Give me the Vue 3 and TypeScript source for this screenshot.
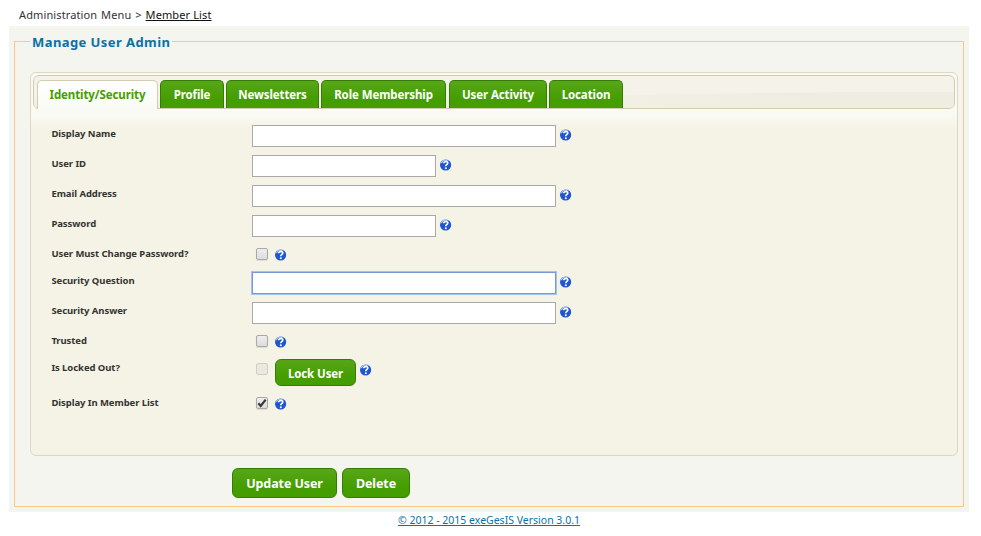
<script setup lang="ts">
import { ref } from 'vue'

interface Tab {
  label: string
  width: number
  gap: number
}

interface Field {
  label: string
  kind: 'wide' | 'short' | 'toggle' | 'lock'
  height: number
  checked?: boolean
  focused?: boolean
}

const tabs: Tab[] = [
  { label: 'Identity/Security', width: 121, gap: 0 },
  { label: 'Profile', width: 64, gap: 2 },
  { label: 'Newsletters', width: 93, gap: 2 },
  { label: 'Role Membership', width: 125, gap: 2 },
  { label: 'User Activity', width: 98, gap: 3 },
  { label: 'Location', width: 74, gap: 2 },
]

const fields: Field[] = [
  { label: 'Display Name', kind: 'wide', height: 30 },
  { label: 'User ID', kind: 'short', height: 30 },
  { label: 'Email Address', kind: 'wide', height: 30 },
  { label: 'Password', kind: 'short', height: 30 },
  { label: 'User Must Change Password?', kind: 'toggle', height: 27 },
  { label: 'Security Question', kind: 'wide', height: 30, focused: true },
  { label: 'Security Answer', kind: 'wide', height: 30 },
  { label: 'Trusted', kind: 'toggle', height: 27 },
  { label: 'Is Locked Out?', kind: 'lock', height: 35 },
  { label: 'Display In Member List', kind: 'toggle', height: 30, checked: true },
]

const active = ref(0)
</script>

<template>
  <div class="page">
    <nav class="crumbs">Administration Menu &gt; <a class="crumb-link">Member List</a></nav>
    <main class="main">
      <section class="frame">
        <h1 class="legend">Manage User Admin</h1>
        <div class="tabs">
          <div class="tabbar">
            <svg class="wave" viewBox="0 0 920 32" preserveAspectRatio="none">
              <defs>
                <linearGradient id="wave-fade" x1="0" x2="1" y1="0" y2="0">
                  <stop offset="0.6" stop-color="#f2efe5" />
                  <stop offset="0.85" stop-color="#efede1" />
                </linearGradient>
              </defs>
              <path d="M0 24 Q350 23 600 19 T920 16 V32 H0Z" fill="url(#wave-fade)" />
            </svg>
            <div class="tablist">
              <button
                v-for="(t, i) in tabs"
                :key="t.label"
                class="tab"
                :class="{ active: active === i }"
                :style="{ width: t.width + 'px', marginLeft: t.gap + 'px' }"
                @click="active = i"
              >{{ t.label }}</button>
            </div>
          </div>
          <div class="fields">
            <div
              v-for="f in fields"
              :key="f.label"
              class="row"
              :class="'row-' + f.kind"
              :style="{ height: f.height + 'px' }"
            >
              <div class="label">{{ f.label }}</div>
              <div
                v-if="f.kind === 'wide' || f.kind === 'short'"
                class="input"
                :class="[f.kind, { focused: f.focused }]"
              ></div>
              <div v-else class="check" :class="{ disabled: f.kind === 'lock' }">
                <svg v-if="f.checked" class="mark" viewBox="0 0 10 10">
                  <path d="M1.4 5.2L3.7 7.9L8.7 1.6" fill="none" stroke="#3b3b3b" stroke-width="2.3" />
                </svg>
              </div>
              <button v-if="f.kind === 'lock'" class="btn lock-btn">Lock User</button>
              <svg class="help" viewBox="0 0 12 12">
                <circle cx="5.6" cy="6" r="5.6" fill="#1f56cf" />
                <path d="M.4 4.8A5.6 5.6 0 0 1 8.2 .9L6.6 2.2Q3.5 1 2.3 3.8Z" fill="#a9c5f4" />
                <path d="M3.7 4.3Q3.8 2.5 5.8 2.5Q7.9 2.6 7.8 4.1Q7.7 5.2 6.4 5.8Q5.8 6.2 5.8 7.2" fill="none" stroke="#fff" stroke-width="1.6" />
                <rect x="4.9" y="8.4" width="1.8" height="1.7" fill="#fff" />
              </svg>
            </div>
          </div>
        </div>
        <div class="actions">
          <button class="btn update-btn">Update User</button>
          <button class="btn delete-btn">Delete</button>
        </div>
      </section>
    </main>
    <footer class="footer"><a>© 2012 - 2015 exeGesIS Version 3.0.1</a></footer>
  </div>
</template>

<style>
body {
  background: #fff;
  overflow: hidden;
}
</style>

<style scoped>
* {
  box-sizing: border-box;
}
.page {
  width: 981px;
  height: 536px;
  font-family: "Noto Sans", "Open Sans", sans-serif;
  color: #333;
}
.crumbs {
  height: 26px;
  padding: 5px 0 0 19px;
  font-size: 11px;
  line-height: 20px;
  letter-spacing: 0.12px;
  word-spacing: 0.9px;
  white-space: nowrap;
}
.crumb-link {
  color: #111;
  text-decoration: underline;
  word-spacing: 0;
  letter-spacing: 0.12px;
}
.main {
  width: 960px;
  height: 486px;
  margin-left: 9px;
  padding: 15px 5px 5px;
  background: #f4f5ef;
}
.frame {
  width: 950px;
  height: 466px;
  border: 1px solid #ffc68c;
  padding-left: 15px;
}
.legend {
  width: 142px;
  height: 20px;
  margin: -10px 0 0;
  padding-left: 2px;
  background: #f4f5ef;
  color: #0972a5;
  font-size: 13px;
  line-height: 20px;
  font-weight: 700;
  letter-spacing: 0.42px;
  white-space: nowrap;
}
.tabs {
  width: 928px;
  height: 384px;
  margin-top: 20px;
  padding: 2px;
  border: 1px solid #ddd8c2;
  border-radius: 6px;
  background: linear-gradient(#fafaf5 0, #fafaf5 42px, #f5f3e5 55px);
}
.tabbar {
  display: grid;
  width: 922px;
  height: 34px;
  border: 1px solid #d4ccb0;
  border-radius: 6px;
  background: #f5f2ea;
}
.wave,
.tablist {
  grid-area: 1 / 1;
}
.wave {
  width: 920px;
  height: 32px;
  border-radius: 5px;
}
.tablist {
  display: flex;
  align-items: flex-start;
  padding: 4px 0 0 3px;
  z-index: 1;
}
.tab {
  display: flex;
  flex: none;
  justify-content: center;
  height: 28px;
  padding: 0;
  border: 1px solid #327e04;
  border-bottom: 0;
  border-radius: 5px 5px 0 0;
  background: linear-gradient(#58a618, #459e00 65%);
  color: #fff;
  font: 700 11.5px/28px "Noto Sans", "Open Sans", sans-serif;
  letter-spacing: -0.1px;
  white-space: nowrap;
}
.tab.active {
  height: 29px;
  border-color: #d4ccb0;
  background: linear-gradient(#fff, #fafaf5);
  color: #459e00;
}
.fields {
  padding: 12px 0 0 18px;
}
.row {
  display: flex;
  align-items: flex-start;
}
.label {
  width: 201px;
  flex: none;
  padding: 3px 0 0 0.4px;
  font-size: 9.5px;
  line-height: 20px;
  font-weight: 700;
  letter-spacing: -0.07px;
  white-space: nowrap;
}
.input {
  height: 22px;
  margin-top: 4px;
  border: 1px solid #a9a9a9;
  background: #fff;
}
.input.wide {
  width: 304px;
}
.input.short {
  width: 184px;
}
.input.focused {
  border-color: #7898d8;
  box-shadow: 0 0 0 1px #a4c4f0;
}
.check {
  width: 12px;
  height: 12px;
  margin: 7px 3px 0 4px;
  border: 1px solid #a8a8a8;
  border-radius: 2px;
  background: linear-gradient(#eee, #dcdcdc);
  box-shadow: 0 1px 1px #dedbd0;
}
.check.disabled {
  margin-top: 8px;
  border-color: #d0cfc5;
  background: #eae9df;
  box-shadow: none;
}
.mark {
  display: block;
  width: 10px;
  height: 10px;
}
.help {
  width: 12px;
  height: 12px;
  margin: 8px 0 0 4px;
}
.row-lock .help {
  margin-top: 9px;
}
.btn {
  flex: none;
  padding: 0;
  border: 1px solid #327e04;
  border-radius: 6px;
  background: linear-gradient(#58a618, #459e00 65%);
  color: #fff;
  font-family: "Noto Sans", "Open Sans", sans-serif;
  font-weight: 700;
  white-space: nowrap;
}
.lock-btn {
  width: 81px;
  height: 27px;
  margin: 4px 0 0;
  padding-top: 2px;
  font-size: 11.5px;
  line-height: 23px;
  letter-spacing: -0.1px;
}
.row-lock .check {
  margin-right: 7px;
}
.actions {
  display: flex;
  gap: 5px;
  padding: 12px 0 0 202px;
}
.update-btn,
.delete-btn {
  height: 30px;
  padding-top: 2px;
  font-size: 12.5px;
  line-height: 26px;
  letter-spacing: -0.1px;
}
.update-btn {
  width: 105px;
}
.delete-btn {
  width: 68px;
}
.footer {
  width: 960px;
  margin-left: 9px;
  text-align: center;
  color: #0972a5;
  font-size: 10.5px;
  line-height: 17px;
}
.footer a {
  text-decoration: underline;
}
</style>
